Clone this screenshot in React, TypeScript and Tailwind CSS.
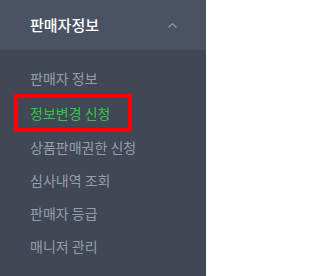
const items = ['판매자 정보', '정보변경 신청', '상품판매권한 신청', '심사내역 조회', '판매자 등급', '매니저 관리'];

export default function App() {
  return (
    <div
      className="w-[206px] h-[276px] bg-[#414755] overflow-hidden"
      style={{ fontFamily: '"Noto Sans CJK KR", "Noto Sans", sans-serif' }}
    >
      <div className="h-[50px] bg-[#4a5364] flex items-center justify-between pl-[30px] pr-[29px]">
        <span className="text-[15px] font-medium text-white">판매자정보</span>
        <svg width="9" height="5" viewBox="0 0 9 5" className="text-[#8c95a4]">
          <path d="M0.5 4.5 L4.5 0.8 L8.5 4.5" fill="none" stroke="currentColor" strokeWidth="1.3" />
        </svg>
      </div>
      <ul className="pt-[12px] flex flex-col">
        {items.map((label, i) =>
          i === 1 ? (
            <li key={label} className="h-[36px] flex items-center">
              <span className="ml-[14px] w-[118px] h-[38px] shrink-0 border-[4px] border-[#ff0000] flex items-center pl-[12px] text-[14px] text-[#2ec84a]">
                {label}
              </span>
            </li>
          ) : (
            <li key={label} className="h-[33px] flex items-center pl-[30px] text-[14px] text-[#959eac]">
              {label}
            </li>
          )
        )}
      </ul>
    </div>
  );
}
